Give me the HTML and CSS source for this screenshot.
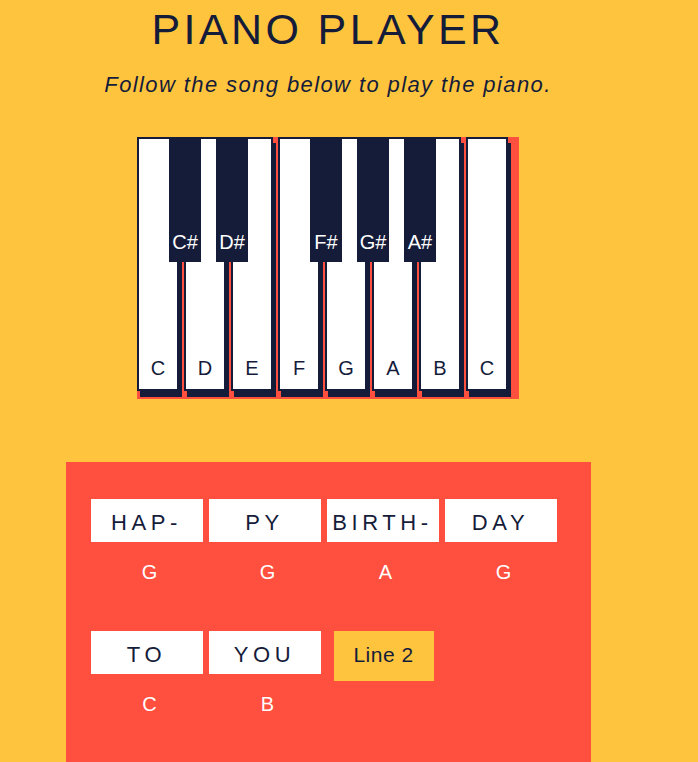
FILE: index.html
```html
<!DOCTYPE html>
<html lang="en">
<head>
<meta charset="utf-8">
<title>Piano Player</title>
<link rel="stylesheet" href="styles.css">
</head>
<body>
<div class="page">
  <h1 class="title">PIANO PLAYER</h1>
  <p class="subtitle">Follow the song below to play the piano.</p>

  <div class="piano">
    <div class="key"><span class="black">C#</span><span class="label">C</span></div>
    <div class="key"><span class="black">D#</span><span class="label">D</span></div>
    <div class="key"><span class="label">E</span></div>
    <div class="key"><span class="black">F#</span><span class="label">F</span></div>
    <div class="key"><span class="black">G#</span><span class="label">G</span></div>
    <div class="key"><span class="black">A#</span><span class="label">A</span></div>
    <div class="key"><span class="label">B</span></div>
    <div class="key"><span class="label">C</span></div>
  </div>

  <div class="song">
    <div class="line">
      <div class="syll"><div class="word">HAP-</div><div class="note">G</div></div>
      <div class="syll"><div class="word">PY</div><div class="note">G</div></div>
      <div class="syll"><div class="word">BIRTH-</div><div class="note">A</div></div>
      <div class="syll"><div class="word">DAY</div><div class="note">G</div></div>
    </div>
    <div class="line">
      <div class="syll"><div class="word">TO</div><div class="note">C</div></div>
      <div class="syll"><div class="word">YOU</div><div class="note">B</div></div>
      <button class="next-btn" type="button">Line 2</button>
    </div>
  </div>
</div>
</body>
</html>
```

FILE: styles.css
```css
html, body {
  margin: 0;
  padding: 0;
  background: #FFC43D;
}

body {
  font-family: "Liberation Sans", Arial, sans-serif;
  color: #151C3A;
}

.page {
  width: 640px;
  padding: 4px 8px 0;
  text-align: center;
}

.title {
  margin: 0;
  font-size: 43px;
  line-height: 50px;
  font-weight: normal;
  letter-spacing: 3.4px;
}

.subtitle {
  margin: 18px 0 0;
  font-size: 22px;
  line-height: 25px;
  font-style: italic;
  letter-spacing: 1.4px;
}

.piano {
  display: flex;
  width: 382px;
  height: 262px;
  margin: 40px auto 0;
  background: #FF4F3F;
}

.key {
  position: relative;
  box-sizing: border-box;
  width: 42px;
  height: 254px;
  margin-right: 5px;
  border: 2px solid #151C3A;
  background: #fff;
  box-shadow: 3px 6px 0 #151C3A;
  display: flex;
  flex-direction: column;
  justify-content: flex-end;
  align-items: center;
  padding-bottom: 9px;
}

.label {
  font-size: 20px;
  line-height: 23px;
}

.black {
  position: absolute;
  z-index: 2;
  top: -2px;
  left: 30px;
  box-sizing: border-box;
  width: 32px;
  height: 125px;
  background: #151C3A;
  color: #fff;
  font-size: 20px;
  line-height: 23px;
  display: flex;
  flex-direction: column;
  justify-content: flex-end;
  align-items: center;
  padding-bottom: 8px;
}

.song {
  box-sizing: border-box;
  width: 525px;
  min-height: 320px;
  margin: 63px auto 0;
  padding: 37px 25px;
  background: #FF4F3F;
}

.line {
  display: flex;
  align-items: flex-start;
  margin-bottom: 47px;
}

.syll {
  width: 118px;
}

.word {
  box-sizing: border-box;
  width: 112px;
  height: 43px;
  padding: 11px 0 6px;
  background: #fff;
  font-size: 22px;
  line-height: 26px;
  letter-spacing: 4.6px;
  text-align: center;
}

.note {
  margin-top: 18px;
  font-size: 20px;
  line-height: 24px;
  color: #fff;
}

.next-btn {
  width: 100px;
  height: 50px;
  margin-left: 7px;
  padding: 0 0 2px;
  border: none;
  background: #FFC43D;
  color: #151C3A;
  font-family: "Liberation Sans", Arial, sans-serif;
  font-size: 21px;
  letter-spacing: 0.5px;
}
```
